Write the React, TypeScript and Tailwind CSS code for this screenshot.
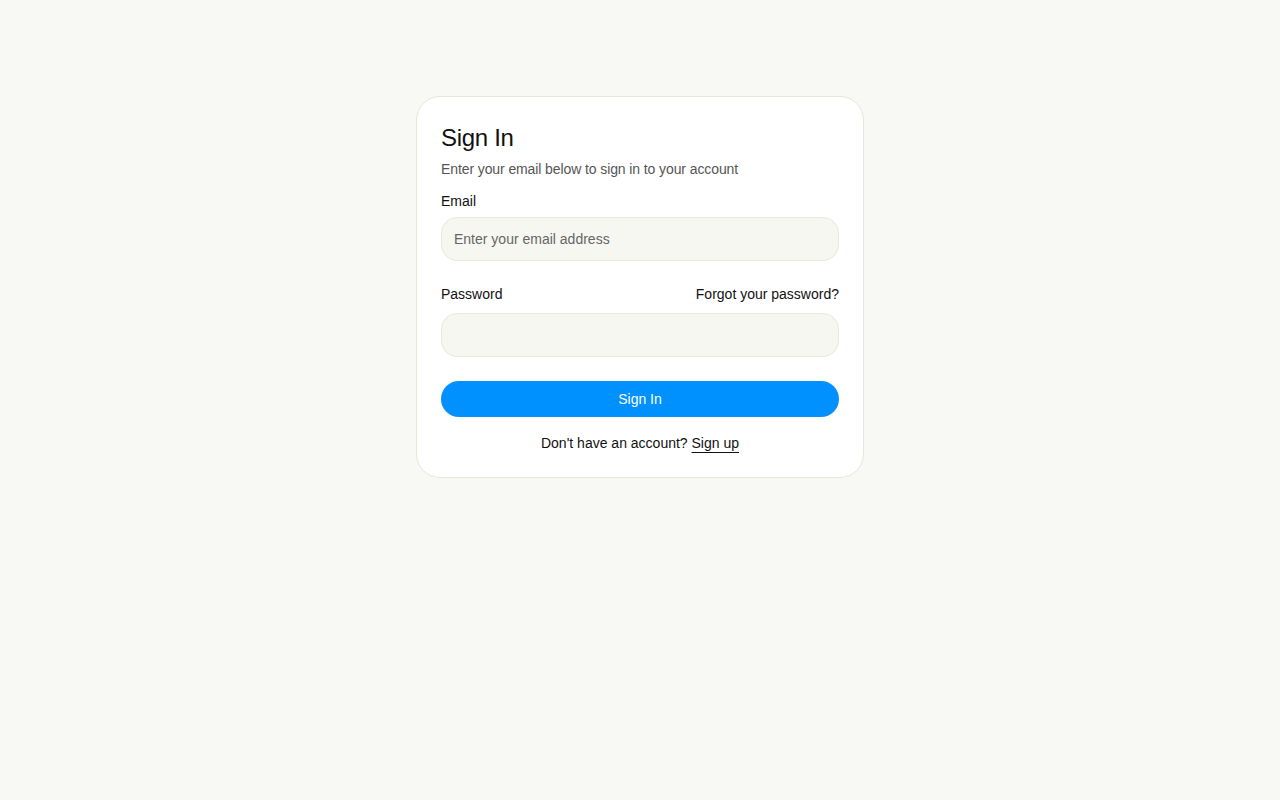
import { FC } from "react";

const App: FC = () => {
  return (
    <div className="min-h-screen bg-[#f8f8f4] pt-24 font-['Liberation_Sans',Arial,sans-serif] text-[#111]">
      <div className="mx-auto w-[448px] rounded-3xl border border-[#e9e6da] bg-white px-6 pt-[25px] pb-6">
        <h1 className="text-2xl leading-8 tracking-[-0.3px]">Sign In</h1>
        <p className="mt-[5px] text-sm tracking-[-0.1px] text-[#555]">
          Enter your email below to sign in to your account
        </p>

        <label className="mt-[12px] block text-sm">Email</label>
        <input
          type="email"
          placeholder="Enter your email address"
          className="mt-[6px] h-11 w-full rounded-2xl border border-[#ebe7d9] bg-[#f7f7f2] px-3 text-sm outline-none placeholder:text-[#666]"
        />

        <div className="mt-[23px] flex items-center justify-between text-sm">
          <label>Password</label>
          <a href="#">Forgot your password?</a>
        </div>
        <input
          type="password"
          className="mt-[9px] h-11 w-full rounded-2xl border border-[#ebe7d9] bg-[#f7f7f2] px-3 text-sm outline-none"
        />

        <button className="mt-6 h-9 w-full rounded-full bg-[#0091ff] text-sm text-white">
          Sign In
        </button>

        <p className="mt-4 text-center text-sm">
          Don't have an account?{" "}
          <a href="#" className="underline underline-offset-4">
            Sign up
          </a>
        </p>
      </div>
    </div>
  );
};

export default App;
